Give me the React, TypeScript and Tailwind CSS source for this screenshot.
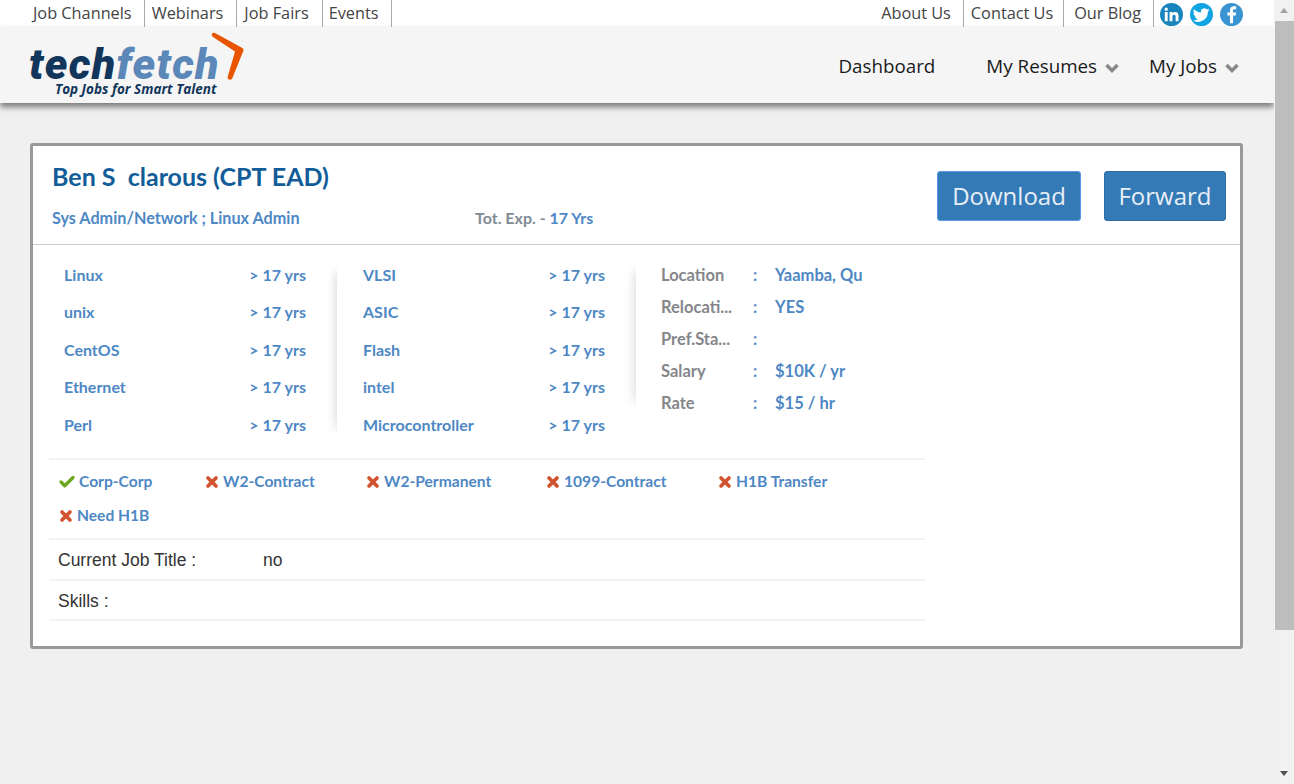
import { Check, X } from "lucide-react";

const sans = "font-['Open_Sans',sans-serif]";
const cal = "font-['Lato',sans-serif]";

const col1 = ["Linux", "unix", "CentOS", "Ethernet", "Perl"];
const col2 = ["VLSI", "ASIC", "Flash", "intel", "Microcontroller"];
const facts = [
  { label: "Location", value: "Yaamba, Qu" },
  { label: "Relocati...", value: "YES" },
  { label: "Pref.Sta...", value: "" },
  { label: "Salary", value: "$10K / yr" },
  { label: "Rate", value: "$15 / hr" },
];
const terms = [
  { name: "Corp-Corp", ok: true, w: "w-[146px]" },
  { name: "W2-Contract", ok: false, w: "w-[161px]" },
  { name: "W2-Permanent", ok: false, w: "w-[180px]" },
  { name: "1099-Contract", ok: false, w: "w-[172px]" },
  { name: "H1B Transfer", ok: false, w: "w-[170px]" },
  { name: "Need H1B", ok: false, w: "w-[146px]" },
];

function Chevron() {
  return (
    <svg viewBox="0 0 14 10" className="ml-[8px] mt-[4px] h-[10px] w-[14px]">
      <path d="M1.500 2 L7 7.500 L12.500 2" fill="none" stroke="#888" strokeWidth="3.400" />
    </svg>
  );
}

function SkillColumn({ items, shadowH }: { items: string[]; shadowH: string }) {
  return (
    <div className="relative w-[299px] pl-[31px]">
      {items.map((s) => (
        <div key={s} className="flex h-[37.5px] w-[242px] items-center justify-between">
          <span>{s}</span>
          <span>&gt; 17 yrs</span>
        </div>
      ))}
      {/* soft shadow of the next column, clipped at its edge */}
      <div className="absolute top-0 right-[-5px] h-[190px] w-[20px] overflow-hidden">
        <div className={`absolute top-[16px] left-full w-[10px] bg-white shadow-[0_0_12px_rgba(0,0,0,0.2)] ${shadowH}`} />
      </div>
    </div>
  );
}

export default function App() {
  return (
    <div className="flex h-[784px] w-[1294px] overflow-hidden bg-[#f0f0f0]">
      <div className="w-[1274px] shrink-0">
        <div className={`flex h-[27px] items-start justify-between bg-white pl-[26px] pr-[31px] text-[16.300px] leading-[27px] text-[#444] ${sans}`}>
          <div className="flex">
            <a className="border-r border-[#aaa] pl-[7px] pr-[12px]">Job Channels</a>
            <a className="border-r border-[#aaa] pl-[7px] pr-[13px]">Webinars</a>
            <a className="border-r border-[#aaa] pl-[7px] pr-[13px]">Job Fairs</a>
            <a className="border-r border-[#aaa] pl-[6px] pr-[12px]">Events</a>
          </div>
          <div className="flex items-start">
            <a className="border-r border-[#aaa] pr-[12px]">About Us</a>
            <a className="border-r border-[#aaa] pl-[7px] pr-[10px]">Contact Us</a>
            <a className="border-r border-[#aaa] pl-[10px] pr-[12px]">Our Blog</a>
            <div className="ml-[6px] flex gap-[7px] pt-[3px]">
              <svg viewBox="0 0 24 24" className="h-[23px] w-[23px]">
                <circle cx="12" cy="12" r="12" fill="#1a84bc" />
                <path fill="#fff" d="M5 9.500h3V19H5zM6.500 4.800a1.750 1.750 0 1 1 0 3.500 1.750 1.750 0 0 1 0-3.500zM10 9.500h2.900v1.300c.5-.9 1.500-1.500 3-1.500 2.700 0 3.400 1.700 3.400 4.200V19h-3v-4.600c0-1.200-.3-2.200-1.500-2.200s-1.800 1-1.800 2.200V19h-3z" />
              </svg>
              <svg viewBox="0 0 24 24" className="h-[23px] w-[23px]">
                <circle cx="12" cy="12" r="12" fill="#10a5e2" />
                <path fill="#fff" d="M20.500 7.200c-.7.300-1.400.5-2.100.6.700-.5 1.300-1.200 1.600-2-.7.400-1.500.7-2.300.9a3.600 3.600 0 0 0-6.200 3.300c-3-.1-5.700-1.600-7.400-3.800-.9 1.600-.5 3.700 1.100 4.800-.6 0-1.100-.2-1.600-.5 0 1.700 1.200 3.200 2.900 3.600-.5.100-1.100.200-1.600 0 .5 1.400 1.800 2.400 3.300 2.500A7.300 7.300 0 0 1 3 18.100a10.200 10.200 0 0 0 15.600-9c.7-.5 1.400-1.200 1.900-1.900z" />
              </svg>
              <svg viewBox="0 0 24 24" className="h-[23px] w-[23px]">
                <circle cx="12" cy="12" r="12" fill="#3a94d2" />
                <path fill="#fff" d="M13.600 21v-8h2.800l.4-3.200h-3.200V7.900c0-.9.300-1.500 1.600-1.500h1.700V3.500c-.3 0-1.300-.1-2.400-.1-2.400 0-4.100 1.500-4.100 4.200v2.200H7.700V13h2.700v8z" />
              </svg>
            </div>
          </div>
        </div>

        <div className={`flex h-[76px] items-center justify-between bg-[#f5f5f5] pl-[29px] pr-[35px] shadow-[0_4px_6px_rgba(0,0,0,0.5)] ${sans}`}>
          <div className="relative h-[76px] w-[220px]">
            <div className="absolute top-[20px] left-0 font-['Roboto',sans-serif] text-[43px] leading-[34px] font-black tracking-[1.3px] whitespace-nowrap italic text-[#12355b]">
              tech<span className="text-[#5b88b8]">fetch</span>
            </div>
            <svg viewBox="210 31 36 52" className="absolute top-[4px] left-[181px] h-[52px] w-[36px]">
              <path fill="#e85400" d="M212 33.500 Q211 35.500 213 37 L235 51.500 L227.500 77.500 Q228.500 81 232 79 L243.500 50.500 Q244 48.500 241.500 47.500 L215 33 Q213 32.500 212 33.500 Z" />
            </svg>
            <div className="absolute top-[54px] left-[26px] text-[13.500px] leading-[16px] font-bold whitespace-nowrap italic text-[#12355b]">
              Top Jobs for Smart Talent
            </div>
          </div>
          <div className="flex items-center pt-[2px] text-[18.800px] text-[#1a1a1a]">
            <span className="mr-[51px]">Dashboard</span>
            <span>My Resumes</span>
            <Chevron />
            <span className="ml-[30px]">My Jobs</span>
            <Chevron />
          </div>
        </div>

        <div className={`mx-[30px] mt-[40px] h-[506px] w-[1213px] rounded-[3px] border-[3px] border-[#999] bg-white ${cal}`}>
          <div className="relative flex h-[99px] justify-between border-b border-[#ccc] pl-[19px] pr-[14px]">
            <div>
              <div className="mt-[12px] text-[25px] leading-[36px] font-bold whitespace-pre text-[#125d99]">Ben S  clarous (CPT EAD)</div>
              <div className="mt-[12px] flex text-[16.200px] leading-[24px] font-bold text-[#4e88c4]">
                <span className="w-[423px]">Sys Admin/Network ; Linux Admin</span>
                <span className="text-[16px] text-[#7f8a94]">Tot. Exp. - <span className="text-[#4e88c4]">17 Yrs</span></span>
              </div>
            </div>
            <div className={`mt-[25px] flex gap-[23px] text-[24px] text-[#e8eef5] ${sans}`}>
              <button className="h-[50px] w-[144px] rounded-[3px] border border-[#5b9ae8] bg-[#337ab7]">Download</button>
              <button className="h-[50px] w-[122px] rounded-[3px] border border-[#2e6da4] bg-[#337ab7]">Forward</button>
            </div>
          </div>

          <div className="flex pt-[11px] text-[16px] font-bold text-[#4e88c4]">
            <SkillColumn items={col1} shadowH="h-[156px]" />
            <SkillColumn items={col2} shadowH="h-[129px]" />
            <div className="pl-[30px] pt-[7px] text-[16.500px]">
              {facts.map((f) => (
                <div key={f.label} className="flex h-[32px] items-start leading-[24px]">
                  <span className="w-[92px] text-[#85868a]">{f.label}</span>
                  <span className="w-[22px] text-[#5b8fc4]">:</span>
                  <span>{f.value}</span>
                </div>
              ))}
            </div>
          </div>

          <div className="mx-[16px] mt-[14px] w-[876px]">
            <div className="flex flex-wrap border-t-2 border-[#f3f3f3] pl-[9px] pt-[5px] pb-[5px] text-[15.600px] font-bold text-[#4e88c4]">
              {terms.map((t) => (
                <div key={t.name} className={`flex h-[34px] items-center gap-[3px] ${t.w}`}>
                  {t.ok ? (
                    <Check className="h-[18px] w-[18px] text-[#6aa91e]" strokeWidth={4.500} />
                  ) : (
                    <X className="h-[16px] w-[16px] text-[#d2532f]" strokeWidth={5.500} />
                  )}
                  <span>{t.name}</span>
                </div>
              ))}
            </div>
            <div className="flex h-[41px] items-center border-t-2 border-[#f3f3f3] pl-[9px] pt-[2px] font-['Liberation_Sans',sans-serif] text-[17.500px] font-normal text-[#333]">
              <span className="w-[205px]">Current Job Title :</span>
              <span>no</span>
            </div>
            <div className="flex h-[42px] items-center border-y-2 border-[#f3f3f3] pl-[9px] pt-[3px] font-['Liberation_Sans',sans-serif] text-[17.500px] text-[#333]">
              Skills :
            </div>
          </div>
        </div>
      </div>

      <div className="flex h-[784px] w-[20px] flex-col items-center bg-[#f1f1f1]">
        <div className="flex h-[21px] w-full items-center justify-center">
          <div className="h-0 w-0 border-x-[4px] border-b-[5px] border-x-transparent border-b-[#a3a3a3]" />
        </div>
        <div className="h-[609px] w-[19px] self-end bg-[#bdbdbd]" />
        <div className="flex-1" />
        <div className="flex h-[21px] w-full items-center justify-center">
          <div className="h-0 w-0 border-x-[4px] border-t-[5px] border-x-transparent border-t-[#505050]" />
        </div>
      </div>
    </div>
  );
}
